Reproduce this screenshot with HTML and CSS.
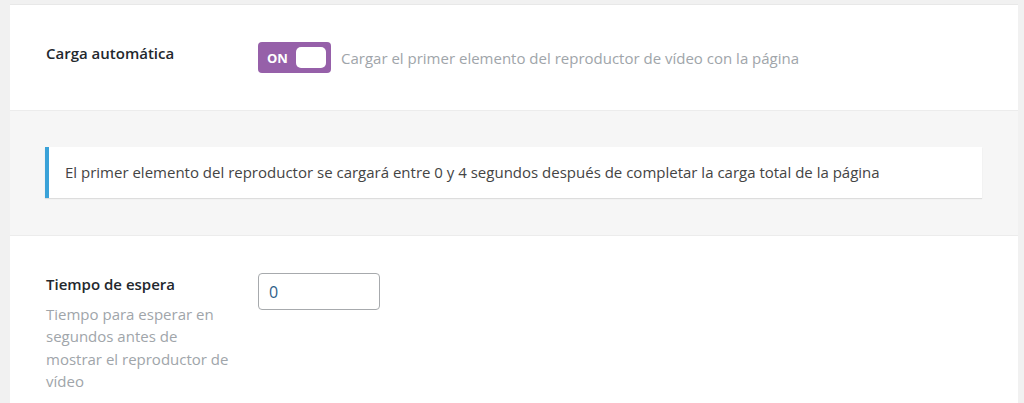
FILE: index.html
```html
<!DOCTYPE html>
<html lang="es">
<head>
  <meta charset="UTF-8">
  <title>Ajustes del reproductor</title>
  <meta name="viewport" content="width=device-width, initial-scale=1.0">
  <link rel="stylesheet" href="styles.css">
</head>
<body>

  <div class="panel">

    <!-- Carga automática -->
    <div class="row">
      <div class="row-label">Carga automática</div>
      <div class="row-field">
        <span class="toggle">
          <span class="toggle-text">ON</span>
          <span class="toggle-knob"></span>
        </span>
        <span class="hint">Cargar el primer elemento del reproductor de vídeo con la página</span>
      </div>
    </div>

    <!-- Aviso -->
    <div class="notice-row">
      <div class="notice">El primer elemento del reproductor se cargará entre 0 y 4 segundos después de completar la carga total de la página</div>
    </div>

    <!-- Tiempo de espera -->
    <div class="row">
      <div class="row-label">
        Tiempo de espera
        <p class="desc">Tiempo para esperar en segundos antes de mostrar el reproductor de vídeo</p>
      </div>
      <div class="row-field">
        <input type="text" class="text-input" value="0">
      </div>
    </div>

  </div>

</body>
</html>
```

FILE: styles.css
```css
html {
  height: 100%;
  overflow: hidden;
}

body {
  font-family: 'Open Sans', 'Noto Sans', sans-serif;
  font-size: 15px;
  background: #f1f1f1;
  color: #23282d;
  margin: 0;
  padding: 4px 6px 0 10px;
  height: 100%;
  box-sizing: border-box;
  overflow: hidden;
}

.panel {
  background: #fff;
  border-top: 1px solid #e8e8e8;
  height: 100%;
}

.row {
  display: flex;
  padding: 37px 36px 37px 36px;
  border-bottom: 1px solid #ececec;
}

.row:last-child {
  border-bottom: none;
  padding-bottom: 0;
}

.row-label {
  width: 200px;
  margin-right: 12px;
  font-weight: 600;
  line-height: 20px;
  padding-top: 1px;
  flex-shrink: 0;
}

.desc {
  margin: 9px 0 0;
  max-width: 190px;
  font-weight: 400;
  color: #a0a5aa;
  line-height: 22.4px;
}

.row-field {
  display: flex;
  align-items: center;
  align-self: flex-start;
}

.toggle {
  display: inline-flex;
  align-items: center;
  justify-content: space-between;
  width: 73px;
  height: 31px;
  box-sizing: border-box;
  padding: 0 5px 0 9px;
  background: #9660a9;
  border-radius: 4px;
}

.toggle-text {
  color: #fff;
  font-weight: 700;
  font-size: 13px;
}

.toggle-knob {
  width: 30px;
  height: 21px;
  background: #fff;
  border-radius: 5px;
}

.hint {
  margin-left: 10px;
  color: #a0a5aa;
}

.notice-row {
  background: #f6f6f6;
  padding: 36px 36px 37px 35px;
  border-bottom: 1px solid #ececec;
}

.notice {
  background: #fff;
  border-left: 4px solid #3aa2d8;
  box-shadow: 0 1px 1px rgba(0, 0, 0, 0.1);
  padding: 15px 16px;
  line-height: 21px;
  color: #444;
}

.text-input {
  width: 122px;
  height: 37px;
  box-sizing: border-box;
  border: 1px solid #a7aaad;
  border-radius: 4px;
  padding: 0 10px;
  font-family: inherit;
  font-size: 16px;
  color: #2f5f8a;
  margin: 0;
}
```
